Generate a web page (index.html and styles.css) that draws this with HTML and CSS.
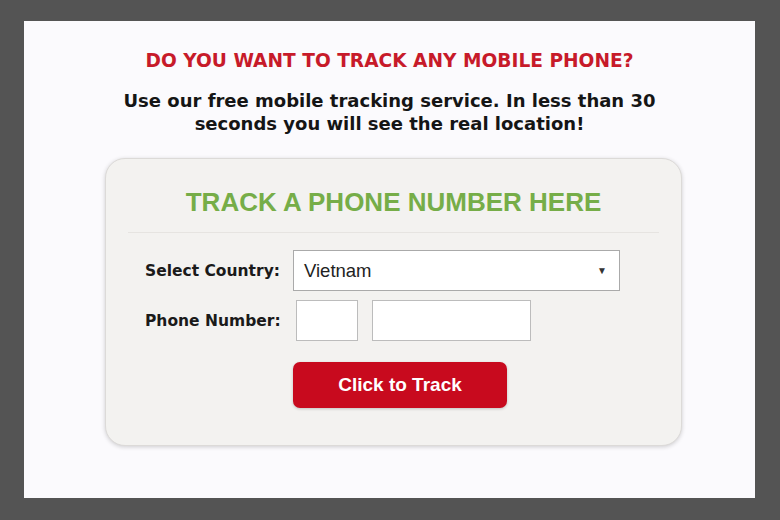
FILE: index.html
```html
<!DOCTYPE html>
<html lang="en">
<head>
  <meta charset="UTF-8" />
  <meta name="viewport" content="width=device-width, initial-scale=1.0" />
  <title>Track a Phone</title>
  <link rel="stylesheet" href="styles.css">
</head>
<body>

<div class="panel">
  <h1 class="ask">DO YOU WANT TO TRACK ANY MOBILE PHONE?</h1>
  <p class="lead">Use our free mobile tracking service. In less than 30<br>seconds you will see the real location!</p>

  <div class="track-box">
    <h2>TRACK A PHONE NUMBER HERE</h2>
    <hr />
    <div class="row">
      <label for="country">Select Country:</label>
      <div class="select">
        <span>Vietnam</span>
        <span class="arrow">&#9660;</span>
      </div>
    </div>
    <div class="row">
      <label>Phone Number:</label>
      <div class="field code"></div>
      <div class="field number"></div>
    </div>
    <div class="actions">
      <button class="btn">Click to Track</button>
    </div>
  </div>
</div>

</body>
</html>
```

FILE: styles.css
```css
body {
  margin: 0;
  padding: 21px 25px 22px 24px;
  background-color: #545454;
  font-family: "DejaVu Sans", Verdana, sans-serif;
  color: #111;
}
.panel {
  height: 477px;
  box-sizing: border-box;
  background-color: #fbfafd;
  padding-top: 29px;
  overflow: hidden;
}
.ask {
  margin: 0;
  text-align: center;
  font-size: 18.6px;
  line-height: 21px;
  font-weight: bold;
  color: #c71a2a;
}
.lead {
  margin: 18px 0 0;
  text-align: center;
  font-size: 18px;
  font-weight: bold;
  line-height: 23px;
  color: #151515;
}
.track-box {
  margin: 23px 0 0 81px;
  width: 577px;
  height: 288px;
  box-sizing: border-box;
  background-color: #f3f2f0;
  border: 1px solid #dcdad8;
  border-radius: 20px;
  box-shadow: 0 1px 4px rgba(0, 0, 0, 0.18);
  padding: 28px 22px 0;
}
.track-box h2 {
  margin: 0;
  text-align: center;
  font-family: "Liberation Sans", Arial, sans-serif;
  font-size: 26px;
  line-height: 30px;
  font-weight: bold;
  color: #76ad48;
}
.track-box hr {
  border: none;
  border-top: 1px solid #e6e4e1;
  margin: 15px 0 17px;
}
.row {
  display: flex;
  align-items: center;
  margin-bottom: 9px;
}
.row label {
  width: 165px;
  padding-left: 17px;
  box-sizing: border-box;
  font-family: "DejaVu Sans", Tahoma, sans-serif;
  font-size: 15.5px;
  font-weight: bold;
  color: #1a1a1a;
}
.select {
  width: 327px;
  height: 41px;
  box-sizing: border-box;
  background-color: #fff;
  border: 1px solid #aaa;
  display: flex;
  align-items: center;
  justify-content: space-between;
  padding: 0 12px 0 10px;
  font-family: "Liberation Sans", Arial, sans-serif;
  font-size: 18.5px;
  color: #222;
}
.select .arrow {
  font-size: 10px;
  color: #333;
}
.field {
  height: 41px;
  box-sizing: border-box;
  background-color: #fff;
  border: 1px solid #bcbcbc;
}
.code {
  width: 62px;
  margin-left: 3px;
}
.number {
  width: 159px;
  margin-left: 14px;
}
.actions {
  padding: 12px 0 0 165px;
}
.btn {
  width: 214px;
  height: 46px;
  background-color: #c80a1e;
  border: none;
  border-radius: 7px;
  color: #fff;
  font-family: "Liberation Sans", Arial, sans-serif;
  font-size: 19px;
  font-weight: bold;
  cursor: pointer;
  box-shadow: 0 1px 3px rgba(0, 0, 0, 0.2);
}
```
